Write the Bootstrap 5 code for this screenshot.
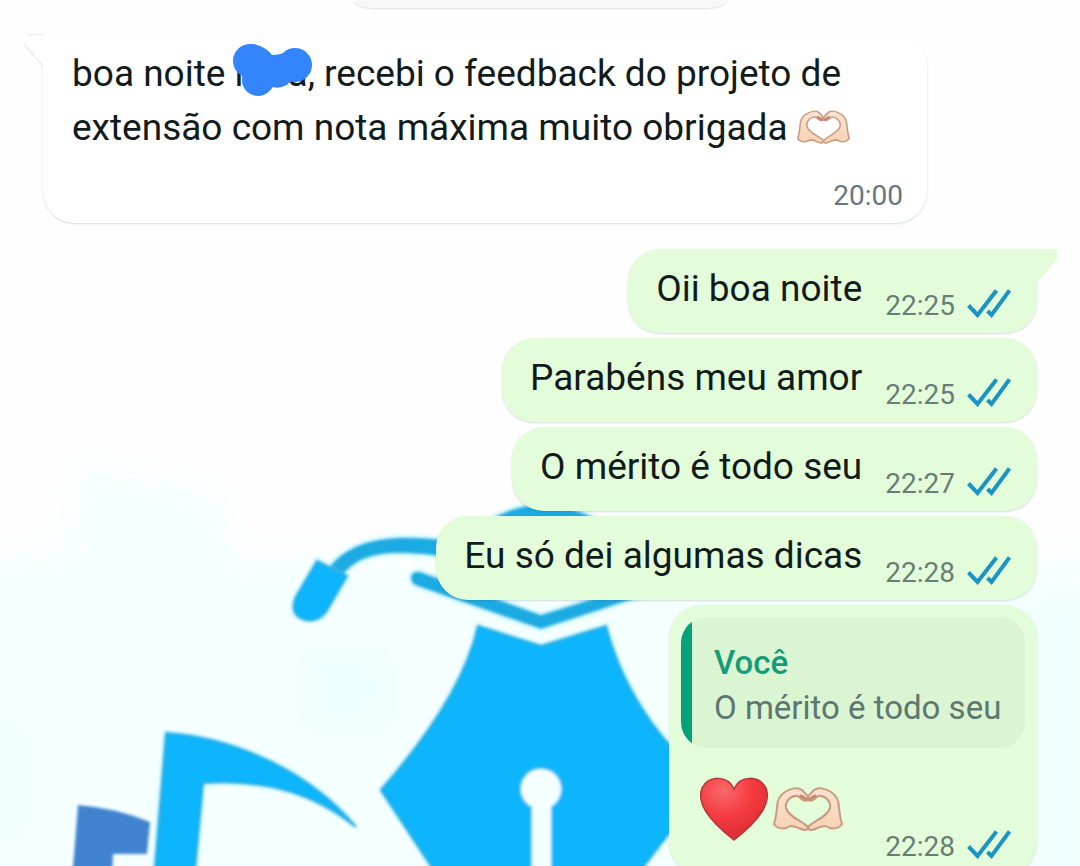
<!DOCTYPE html>
<html lang="pt-BR">
<head>
<meta charset="utf-8">
<meta name="viewport" content="width=device-width, initial-scale=1">
<title>Conversa</title>
<link href="https://cdn.jsdelivr.net/npm/bootstrap@5.3.0/dist/css/bootstrap.min.css" rel="stylesheet">
<style>
  body { font-family: Roboto, "Noto Sans", sans-serif; color: #111b1b; background: #fefefe; }
  .chat { height: 100vh; padding: 0 43px; }
  .wallpaper { z-index: 0; bottom: 0; left: 0; }
  .thread { z-index: 1; }
  .day-pill { width: 374px; height: 8px; background: #f8f8f8; border-radius: 0 0 24px 24px / 0 0 8px 8px; box-shadow: 0 1px 2px #e0e0e0; margin-bottom: 26px; }
  .bubble { border-radius: 32px; box-shadow: 0 1px 2px rgba(40, 60, 70, .18); font-size: 37px; line-height: 54px; }
  .bubble-in { background: #fefffe; width: 884px; padding: 13px 24px 6px 29px; border-top-left-radius: 0; margin-bottom: 26px; }
  .bubble-out { background: #e3fdda; padding: 13px 26px 6px 28px; min-height: 84px; margin-bottom: 5px; }
  .bubble-out .words { margin: 0 23px 11px 0; }
  .first-out { border-top-right-radius: 0; }
  .tail { top: 0; }
  .tail-in { left: -19px; }
  .tail-out { right: -20px; }
  .stamp { font-size: 28px; line-height: 42px; color: #667781; }
  .bubble-out .stamp { color: #667f76; gap: 12px; }
  .stamp svg { margin-bottom: 5px; }
  .inline-emoji { vertical-align: -4px; }
  .hidden-name { width: 73px; }
  .scribble { left: -2px; top: -4px; }
  .bubble-reply { width: 368px; padding: 12px 12px 6px; margin-bottom: 0; }
  .quote { background: linear-gradient(to right, #06a17c 11px, #dbf5d3 11px); border-radius: 26px; padding: 23px 22px 18px 33px; font-size: 33px; line-height: 45px; color: #5d7771; }
  .quote-name { color: #159b76; font-weight: 500; }
  .reactions { gap: 4px; padding: 29px 18px 0; }
  .bubble-reply .stamp { padding-right: 14px; margin-top: -15px; }
</style>
</head>
<body>
<svg class="position-absolute" width="0" height="0" aria-hidden="true">
  <defs>
    <linearGradient id="skin" x1="0" y1="0" x2="0" y2="1">
      <stop offset="0" stop-color="#fae3d3"/><stop offset="1" stop-color="#f6d2b4"/>
    </linearGradient>
    <radialGradient id="red" cx=".35" cy=".2" r=".85">
      <stop offset="0" stop-color="#f8696a"/><stop offset=".5" stop-color="#f53b40"/><stop offset="1" stop-color="#d92a30"/>
    </radialGradient>
    <symbol id="ticks" viewBox="0 0 44 29">
      <path d="M1.5 16.5 10.500 26 29.500 1.500M20.500 22 24.500 26 42.500 1.500" fill="none" stroke="#1b94c4" stroke-width="4"/>
    </symbol>
    <symbol id="hands" viewBox="0 0 70 44">
      <g fill="url(#skin)" stroke="#c99c82" stroke-width="2" stroke-linejoin="round">
        <path d="M35 13C31 15 28 12 25 9C18 8 12 14 13 21C15 29 27 33 34 39C36 43 32 44 28 42C24 40 21 39 17 39C12 43 4 42 1 37C3 31 3 28 4 21C4 14 7 8 12 5C18 1 25 0 29 3C31 5 34 8 35 10Z"/>
        <path d="M35 13C39 15 42 12 45 9C52 8 58 14 57 21C55 29 43 33 36 39C34 43 38 44 42 42C46 40 49 39 53 39C58 43 66 42 69 37C67 31 67 28 66 21C66 14 63 8 58 5C52 1 45 0 41 3C39 5 36 8 35 10Z"/>
      </g>
      <path d="M28 9 33 12M42 9 37 12" stroke="#c4866b" stroke-width="3" fill="none" stroke-linecap="round"/>
    </symbol>
  </defs>
</svg>

<main class="chat position-relative overflow-hidden">
  <svg class="wallpaper position-absolute" width="1080" height="866" viewBox="0 0 1080 866" aria-hidden="true">
    <defs>
      <filter id="soft" x="-5%" y="-5%" width="110%" height="110%"><feGaussianBlur stdDeviation="1.500"/></filter>
      <filter id="mist" x="-20%" y="-20%" width="140%" height="140%"><feGaussianBlur stdDeviation="14"/></filter>
      <g id="nib">
        <path d="M478 626 541 646 606 626C618 672 642 716 674 750L702 790 644 866V880H441L431 866 381 790C424 741 466 681 478 626Z"/>
        <path d="M317 561 347 576 326 612C317 624 301 622 295 613 292 606 294 600 297 595Z"/>
        <path d="M166 733C235 738 309 771 356 827C314 793 266 779 203 783L194 880H154Z"/>
      </g>
      <g id="cap">
        <path d="M490 520Q540 490 598 520Z"/>
        <path d="M412 574Q416 571 420 572L541 615 660 578V590L541 629 415 585Q409 580 412 574Z"/>
        <path d="M330 566C354 539 390 533 450 541V557C394 550 365 550 344 573Z"/>
      </g>
    </defs>
    <path d="M-30 560 70 550 80 465 210 490 240 560 1110 560V900H-30Z" fill="#f6ffff" filter="url(#mist)"/>
    <path d="M302 650H390V730H302ZM-20 720H20V840H-20ZM1038 600H1090V900H1038Z" fill="#edffff" filter="url(#mist)"/>
    <g fill="#e2fcff" stroke="#e2fcff" stroke-width="8" filter="url(#soft)"><use href="#nib"/><use href="#cap"/></g>
    <g filter="url(#soft)">
      <use href="#nib" fill="#0eb6fc" stroke="#22a9de" stroke-width="2"/>
      <use href="#cap" fill="#1daae2"/>
      <path d="M78 805Q116 808 150 822L147 854H113L112 880H72Z" fill="#4083cf"/>
      <circle cx="541" cy="789" r="20" fill="#f4ffff"/>
      <path d="M532 800H551V890H532Z" fill="#f4ffff"/>
    </g>
  </svg>

  <div class="thread position-relative d-flex flex-column align-items-end">
    <div class="day-pill align-self-center"></div>

    <article class="bubble bubble-in position-relative align-self-start">
      <svg class="tail tail-in position-absolute" width="20" height="34" viewBox="0 0 20 34" aria-hidden="true">
        <path d="M20 0H4Q0 0 0 5V10L19 31H20Z" fill="#fefffe"/><path d="M20 .5H4M0 10 18 31V34" fill="none" stroke="#ededed" stroke-width="1.500"/>
      </svg>
      <div>boa noite <span class="hidden-name position-relative d-inline-flex justify-content-between"><span>n</span><span>a</span><svg class="scribble position-absolute" width="80" height="54" viewBox="0 0 80 54" aria-hidden="true"><g fill="#3484fb"><circle cx="17" cy="18" r="17"/><circle cx="25" cy="37" r="16"/><circle cx="62" cy="22" r="17"/><path d="M20 1Q34 4 39 12 45 12 51 10L58 6 66 38Q58 37 54 42 46 46 40 44L32 51 10 33Z"/></g></svg></span>, recebi o feedback do projeto de<br>extensão com nota máxima muito obrigada <svg class="inline-emoji" width="53" height="34" role="img" aria-label="mãos em coração"><use href="#hands"/></svg></div>
      <div class="stamp text-end mt-3 pt-1">20:00</div>
    </article>

    <article class="bubble bubble-out first-out position-relative d-flex align-items-end">
      <svg class="tail tail-out position-absolute" width="21" height="36" viewBox="0 0 21 36" aria-hidden="true"><path d="M0 0H18Q21 0 21 3V10L1 34H0Z" fill="#e3fdda"/></svg>
      <div class="words">Oii boa noite</div>
      <div class="stamp d-flex align-items-center"><span>22:25</span><svg width="44" height="29" aria-hidden="true"><use href="#ticks"/></svg></div>
    </article>
    <article class="bubble bubble-out d-flex align-items-end">
      <div class="words">Parabéns meu amor</div>
      <div class="stamp d-flex align-items-center"><span>22:25</span><svg width="44" height="29" aria-hidden="true"><use href="#ticks"/></svg></div>
    </article>
    <article class="bubble bubble-out d-flex align-items-end">
      <div class="words">O mérito é todo seu</div>
      <div class="stamp d-flex align-items-center"><span>22:27</span><svg width="44" height="29" aria-hidden="true"><use href="#ticks"/></svg></div>
    </article>
    <article class="bubble bubble-out d-flex align-items-end">
      <div class="words">Eu só dei algumas dicas</div>
      <div class="stamp d-flex align-items-center"><span>22:28</span><svg width="44" height="29" aria-hidden="true"><use href="#ticks"/></svg></div>
    </article>

    <article class="bubble bubble-out bubble-reply">
      <div class="quote">
        <div class="quote-name">Você</div>
        <div class="text-nowrap">O mérito é todo seu</div>
      </div>
      <div class="reactions d-flex align-items-center">
        <svg width="70" height="64" viewBox="0 0 70 64" role="img" aria-label="coração"><path d="M35 12C41-2 60-2 67 11C72 25 63 41 35 63C7 41-2 25 3 11C10-2 29-2 35 12Z" fill="url(#red)" stroke="#b5353b" stroke-width="1.500"/></svg>
        <svg width="70" height="44" role="img" aria-label="mãos em coração"><use href="#hands"/></svg>
      </div>
      <div class="stamp d-flex align-items-center justify-content-end"><span>22:28</span><svg width="44" height="29" aria-hidden="true"><use href="#ticks"/></svg></div>
    </article>
  </div>
</main>
<script src="https://cdn.jsdelivr.net/npm/bootstrap@5.3.0/dist/js/bootstrap.bundle.min.js"></script>
</body>
</html>
